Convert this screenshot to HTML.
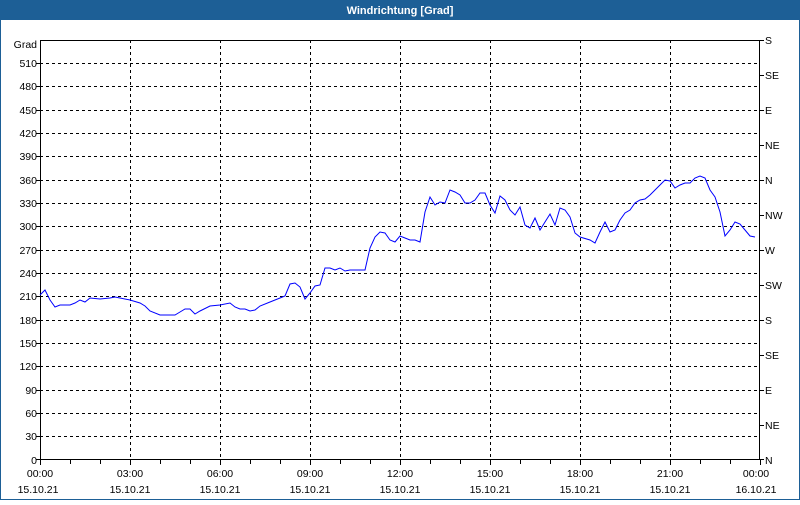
<!DOCTYPE html><html><head><style>
body{margin:0;width:800px;height:500px;overflow:hidden;background:#fff;font-family:"Liberation Sans",sans-serif;}
</style></head><body>
<svg width="800" height="500" xmlns="http://www.w3.org/2000/svg" font-family="Liberation Sans, sans-serif" font-size="10.5">
<rect x="0" y="0" width="800" height="500" fill="#fff"/>
<rect x="0.5" y="0.5" width="799" height="499" fill="none" stroke="#1d5f96"/>
<rect x="0" y="0" width="800" height="20" fill="#1d5f96"/>
<text x="400" y="14" fill="#fff" font-weight="bold" font-size="11" text-anchor="middle">Windrichtung [Grad]</text>
<g stroke="#000" stroke-dasharray="3,3" stroke-width="1">
<line x1="40" y1="63.5" x2="760" y2="63.5"/><line x1="40" y1="86.5" x2="760" y2="86.5"/><line x1="40" y1="110.5" x2="760" y2="110.5"/><line x1="40" y1="133.5" x2="760" y2="133.5"/><line x1="40" y1="156.5" x2="760" y2="156.5"/><line x1="40" y1="180.5" x2="760" y2="180.5"/><line x1="40" y1="203.5" x2="760" y2="203.5"/><line x1="40" y1="226.5" x2="760" y2="226.5"/><line x1="40" y1="250.5" x2="760" y2="250.5"/><line x1="40" y1="273.5" x2="760" y2="273.5"/><line x1="40" y1="296.5" x2="760" y2="296.5"/><line x1="40" y1="320.5" x2="760" y2="320.5"/><line x1="40" y1="343.5" x2="760" y2="343.5"/><line x1="40" y1="366.5" x2="760" y2="366.5"/><line x1="40" y1="390.5" x2="760" y2="390.5"/><line x1="40" y1="413.5" x2="760" y2="413.5"/><line x1="40" y1="436.5" x2="760" y2="436.5"/>
<line x1="130.5" y1="40" x2="130.5" y2="460"/><line x1="220.5" y1="40" x2="220.5" y2="460"/><line x1="310.5" y1="40" x2="310.5" y2="460"/><line x1="400.5" y1="40" x2="400.5" y2="460"/><line x1="490.5" y1="40" x2="490.5" y2="460"/><line x1="580.5" y1="40" x2="580.5" y2="460"/><line x1="670.5" y1="40" x2="670.5" y2="460"/>
</g>
<rect x="40.5" y="40.5" width="719" height="419" fill="none" stroke="#000"/>
<g stroke="#000">
<path d="M70.5 460v4M100.5 460v4M160.5 460v4M190.5 460v4M250.5 460v4M280.5 460v4M340.5 460v4M370.5 460v4M430.5 460v4M460.5 460v4M520.5 460v4M550.5 460v4M610.5 460v4M640.5 460v4M700.5 460v4M730.5 460v4M40.5 460v5M130.5 460v5M220.5 460v5M310.5 460v5M400.5 460v5M490.5 460v5M580.5 460v5M670.5 460v5M760.5 460v5"/>
<path d="M760 40.5h4M760 75.5h4M760 110.5h4M760 145.5h4M760 180.5h4M760 215.5h4M760 250.5h4M760 285.5h4M760 320.5h4M760 355.5h4M760 390.5h4M760 425.5h4M760 459.5h4"/>
<path d="M36 63.5h4M36 86.5h4M36 110.5h4M36 133.5h4M36 156.5h4M36 180.5h4M36 203.5h4M36 226.5h4M36 250.5h4M36 273.5h4M36 296.5h4M36 320.5h4M36 343.5h4M36 366.5h4M36 390.5h4M36 413.5h4M36 436.5h4M36 459.5h4"/>
</g>
<g text-anchor="end" fill="#000">
<text x="37" y="48">Grad</text>
<text x="37" y="67">510</text><text x="37" y="90">480</text><text x="37" y="114">450</text><text x="37" y="137">420</text><text x="37" y="160">390</text><text x="37" y="184">360</text><text x="37" y="207">330</text><text x="37" y="230">300</text><text x="37" y="254">270</text><text x="37" y="277">240</text><text x="37" y="300">210</text><text x="37" y="324">180</text><text x="37" y="347">150</text><text x="37" y="370">120</text><text x="37" y="394">90</text><text x="37" y="417">60</text><text x="37" y="440">30</text><text x="37" y="464">0</text>
</g>
<g fill="#000">
<text x="765" y="44">S</text><text x="765" y="79">SE</text><text x="765" y="114">E</text><text x="765" y="149">NE</text><text x="765" y="184">N</text><text x="765" y="219">NW</text><text x="765" y="254">W</text><text x="765" y="289">SW</text><text x="765" y="324">S</text><text x="765" y="359">SE</text><text x="765" y="394">E</text><text x="765" y="429">NE</text><text x="765" y="464">N</text>
</g>
<g text-anchor="middle" fill="#000">
<text x="40" y="477">00:00</text><text x="130" y="477">03:00</text><text x="220" y="477">06:00</text><text x="310" y="477">09:00</text><text x="400" y="477">12:00</text><text x="490" y="477">15:00</text><text x="580" y="477">18:00</text><text x="670" y="477">21:00</text><text x="756" y="477">00:00</text>
<text x="38" y="493">15.10.21</text><text x="130" y="493">15.10.21</text><text x="220" y="493">15.10.21</text><text x="310" y="493">15.10.21</text><text x="400" y="493">15.10.21</text><text x="490" y="493">15.10.21</text><text x="580" y="493">15.10.21</text><text x="670" y="493">15.10.21</text><text x="756" y="493">16.10.21</text>
</g>
<polyline fill="none" stroke="#0000ff" stroke-width="1" points="40,295 45,290 50,300 55,307 60,305 70,305 75,303 80,300 85,302 90,298 100,299 110,298 115,297 120,298 130,300 140,303 145,306 150,311 160,315 175,315 180,312 185,309 190,309 195,314 200,311 210,306 220,305 230,303 235,307 240,309 245,309 250,311 255,310 260,306 270,302 280,298 285,296 290,284 295,283 300,287 305,299 310,293 315,286 320,285 325,268 330,268 335,270 340,268 345,271 350,270 355,270 365,270 370,248 375,237 380,232 385,233 390,240 395,242 400,236 405,238 410,240 415,240 420,242 425,212 430,197 435,205 440,202 445,203 450,190 455,192 460,195 465,203 470,203 475,200 480,193 485,193 490,205 495,213 500,196 505,200 510,210 515,215 520,207 525,225 530,228 535,218 540,230 545,222 550,214 555,225 560,208 565,210 570,217 575,233 580,237 590,240 595,243 600,232 605,222 610,232 615,230 620,220 625,213 630,210 635,203 640,200 645,199 650,195 655,190 660,185 665,180 670,181 675,188 680,185 685,183 690,183 695,178 700,176 705,178 710,190 715,197 720,212 725,236 730,230 735,222 740,224 745,230 750,236 755,237"/>
</svg>
</body></html>
